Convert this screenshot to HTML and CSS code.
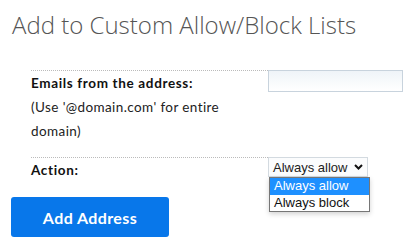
FILE: index.html
```html
<!DOCTYPE html>
<html>
<head>
<meta charset="utf-8">
<link rel="stylesheet" href="styles.css">
</head>
<body>
<div class="page">
  <h1 class="title">Add to Custom Allow/Block Lists</h1>
  <div class="form">
    <div class="row">
      <div class="label">
        <strong>Emails from the address:</strong>
        <div class="help">(Use '@domain.com' for entire domain)</div>
      </div>
      <div class="field"><input class="text-input" type="text"></div>
    </div>
    <div class="row row-action">
      <div class="label"><strong>Action:</strong></div>
      <div class="field">
        <div class="select">
          <span>Always allow</span>
          <svg class="chev" width="9" height="6" viewBox="0 0 9 6"><path d="M1 1 L4.5 4.5 L8 1" fill="none" stroke="#111" stroke-width="2"/></svg>
          <ul class="dropdown">
            <li class="opt selected">Always allow</li>
            <li class="opt">Always block</li>
          </ul>
        </div>
      </div>
    </div>
  </div>
  <button class="btn">Add Address</button>
</div>
</body>
</html>
```

FILE: styles.css
```css
html, body { margin: 0; padding: 0; background: #fff; }
.page { padding: 0 0 0 11px; font-family: "Lato", "Noto Sans", sans-serif; color: #222; }
.title {
  margin: 0; padding: 9px 0 0 1px;
  font-family: "Open Sans", sans-serif; font-weight: 300;
  font-size: 24px; line-height: 32px; color: #555;
  letter-spacing: 0;
}
.form { margin: 29px 0 0 20px; width: 372px; }
.row { display: flex; }
.label {
  width: 237px; box-sizing: border-box; padding: 0 20px 14px 0;
  border-top: 1px dotted #bbb;
  font-size: 13.5px; line-height: 24px; color: #222;
}
.label strong { font-weight: 700; color: #111; letter-spacing: 0.65px; }
.help { font-size: 13.5px; letter-spacing: 0.4px; }
.row-action .label { padding-bottom: 0; }
.field { flex: 1; position: relative; }
.text-input {
  display: block; width: 135px; height: 22px; box-sizing: border-box; margin: 0;
  border: 1px solid #c8d3dd; background: linear-gradient(#eff4f8, #fff);
  padding: 0 4px; outline: none;
}
.select {
  position: relative; width: 100px; height: 20px; box-sizing: border-box;
  border: 1px solid #d3dae0; background: #fbfcfd;
  font-family: "Liberation Sans", Arial, sans-serif; font-size: 13px; color: #222;
  display: flex; align-items: center; justify-content: space-between; padding: 0 4px 0 4px;
}
.chev { display: block; margin-right: 0; }
.dropdown {
  position: absolute; top: 19px; left: 0; width: 101px; box-sizing: border-box;
  margin: 0; padding: 0; list-style: none;
  border: 1px solid #767676; background: #fff;
  box-shadow: 0 2px 5px rgba(0,0,0,0.18);
}
.opt { height: 16.5px; line-height: 16.5px; padding: 0 4px; color: #111; }
.opt.selected { background: #1e90ff; color: #fff; }
.btn {
  display: block; margin-top: 15px; width: 158px; height: 40px;
  border: 0; border-radius: 3px; background: #0877ea; color: #fff;
  font-family: "Lato", sans-serif; font-weight: 700; font-size: 16px; padding: 0;
  letter-spacing: 0.4px;
}
```
